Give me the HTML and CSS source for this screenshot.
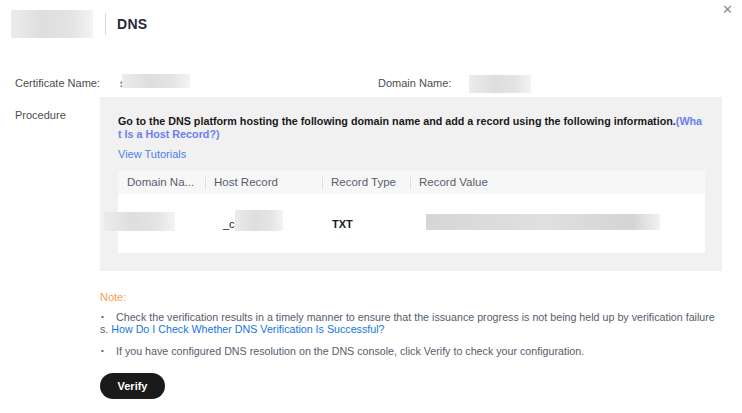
FILE: index.html
```html
<!DOCTYPE html>
<html lang="en">
<head>
    <meta charset="UTF-8">
    <meta name="viewport" content="width=device-width, initial-scale=1.0">
    <title>DNS</title>
    <link rel="stylesheet" href="styles.css">
</head>
<body>
    <div class="dialog">
        <!-- 顶部标题 -->
        <div class="header">
            <div class="logo blur"></div>
            <div class="divider"></div>
            <h2 class="title">DNS</h2>
        </div>
        <span class="close">&#x2715;</span>

        <!-- 证书信息 -->
        <div class="info-row">
            <div class="label">Certificate Name:</div>
            <div class="value">s<span class="blur cert-blur"></span></div>
            <div class="label label-domain">Domain Name:</div>
            <div class="value"><span class="blur domain-blur"></span></div>
        </div>

        <!-- 操作步骤 -->
        <div class="procedure-row">
            <div class="label procedure-label">Procedure</div>
            <div class="procedure-box">
                <p class="procedure-text">Go to the DNS platform hosting the following domain name and add a record using the following information.<a class="host-link">(What Is a Host Record?)</a></p>
                <a class="tutorial-link">View Tutorials</a>

                <div class="record-table">
                    <div class="table-head">
                        <div class="cell col-domain">Domain Na...</div>
                        <div class="cell col-host">Host Record</div>
                        <div class="cell col-type">Record Type</div>
                        <div class="cell col-value">Record Value</div>
                    </div>
                    <div class="table-row">
                        <div class="cell col-domain"><span class="blur row-domain"></span></div>
                        <div class="cell col-host host-cell">_c<span class="blur row-host"></span></div>
                        <div class="cell col-type type-cell">TXT</div>
                        <div class="cell col-value"><span class="blur row-value"></span></div>
                    </div>
                </div>
            </div>
        </div>

        <!-- 注意事项 -->
        <div class="notes">
            <p class="note-title">Note:</p>
            <p class="note-item"><span class="bullet">&bull;</span>Check the verification results in a timely manner to ensure that the issuance progress is not being held up by verification failures. <a class="note-link">How Do I Check Whether DNS Verification Is Successful?</a></p>
            <p class="note-item"><span class="bullet">&bull;</span>If you have configured DNS resolution on the DNS console, click Verify to check your configuration.</p>
            <button class="verify-btn">Verify</button>
        </div>
    </div>
</body>
</html>
```

FILE: styles.css
```css
/* 基础样式 */
* {
    margin: 0;
    padding: 0;
    box-sizing: border-box;
}

body {
    background: #fff;
    font-family: "Liberation Sans", Arial, sans-serif;
    font-size: 11px;
    color: #575d6c;
}

a {
    cursor: pointer;
}

.dialog {
    position: relative;
    width: 742px;
    height: 413px;
}

/* 模糊遮挡块 */
.blur {
    display: inline-block;
    background: linear-gradient(90deg, #ececec, #dedede 40%, #e4e4e4 75%, #f4f4f4);
}

/* 标题栏 */
.header {
    display: flex;
    align-items: center;
    height: 48px;
    padding-left: 11px;
}

.logo {
    width: 82px;
    height: 28px;
}

.divider {
    width: 1px;
    height: 22px;
    background: #dcdcdc;
    margin-left: 12px;
}

.title {
    margin-left: 11px;
    font-size: 14px;
    font-weight: bold;
    color: #252b3a;
    letter-spacing: 0.3px;
}

.close {
    position: absolute;
    top: 2px;
    right: 9px;
    font-size: 13px;
    color: #8a8e99;
}

/* 信息行 */
.info-row {
    display: flex;
    align-items: center;
    height: 20px;
    margin-top: 25px;
    padding-left: 15px;
}

.label {
    width: 105px;
    line-height: 20px;
    color: #4d4d4d;
}

.value {
    display: flex;
    align-items: center;
    width: 258px;
    color: #4d4d4d;
}

.cert-blur {
    width: 68px;
    height: 14px;
    margin-left: -4px;
    margin-top: -4px;
}

.label-domain {
    width: 91px;
}

.domain-blur {
    width: 62px;
    height: 18px;
    margin-top: 2px;
}

/* 操作步骤 */
.procedure-row {
    display: flex;
    margin-top: 4px;
    padding-left: 15px;
}

.procedure-label {
    width: 85px;
    padding-top: 8px;
}

.procedure-box {
    width: 622px;
    height: 174px;
    background: #f1f1f1;
    padding: 18px 17px 0 18px;
}

.procedure-text {
    font-size: 10.75px;
    font-weight: bold;
    color: #191919;
    line-height: 13px;
    word-break: break-all;
}

.host-link {
    color: #6a7ff0;
}

.tutorial-link {
    display: block;
    margin-top: 7px;
    line-height: 13px;
    color: #4f7ef0;
}

/* 记录表格 */
.record-table {
    margin-top: 9px;
    width: 587px;
}

.table-head {
    display: flex;
    height: 24px;
    align-items: center;
    background: #f7f7f7;
}

.table-head .cell {
    position: relative;
    padding-left: 9px;
    color: #575d6c;
    font-size: 11.5px;
}

.table-head .cell + .cell::before {
    content: '';
    position: absolute;
    left: 0;
    top: 0;
    width: 1px;
    height: 14px;
    background: #dfe1e6;
}

.col-domain { width: 87px; }
.col-host { width: 117px; }
.col-type { width: 88px; }
.col-value { width: 295px; }

.table-row {
    display: flex;
    align-items: center;
    height: 59px;
    background: #fff;
}

.table-row .cell {
    display: flex;
    align-items: center;
    padding-left: 9px;
}

.row-domain {
    width: 71px;
    height: 19px;
    margin-left: -23px;
    margin-top: -4px;
}

.host-cell {
    color: #191919;
    padding-left: 18px !important;
}

.row-host {
    width: 48px;
    height: 21px;
    margin-top: -6px;
}

.type-cell {
    color: #191919;
    font-weight: bold;
    padding-left: 10px !important;
}

.row-value {
    width: 234px;
    height: 16px;
    margin-left: 7px;
    margin-top: -3px;
    background: linear-gradient(90deg, #d6d6d6, #e0e0e0 50%, #d4d4d4 88%, #f2f2f2);
}

/* 注意事项 */
.notes {
    padding: 19px 20px 0 100px;
}

.note-title {
    color: #f7a14f;
    line-height: 14px;
}

.note-item {
    margin-top: 7px;
    font-size: 10.7px;
    line-height: 12px;
    word-break: break-all;
}

.note-item + .note-item {
    margin-top: 10px;
}

.bullet {
    display: inline-block;
    width: 16px;
    padding-left: 1px;
    font-size: 8px;
    vertical-align: top;
}

.note-link {
    color: #1476e0;
}

.verify-btn {
    display: block;
    margin-top: 16px;
    width: 65px;
    height: 26px;
    border: none;
    border-radius: 13px;
    background: #1a1a1a;
    color: #fff;
    font-family: "Liberation Sans", Arial, sans-serif;
    font-size: 11px;
    font-weight: bold;
}
```
